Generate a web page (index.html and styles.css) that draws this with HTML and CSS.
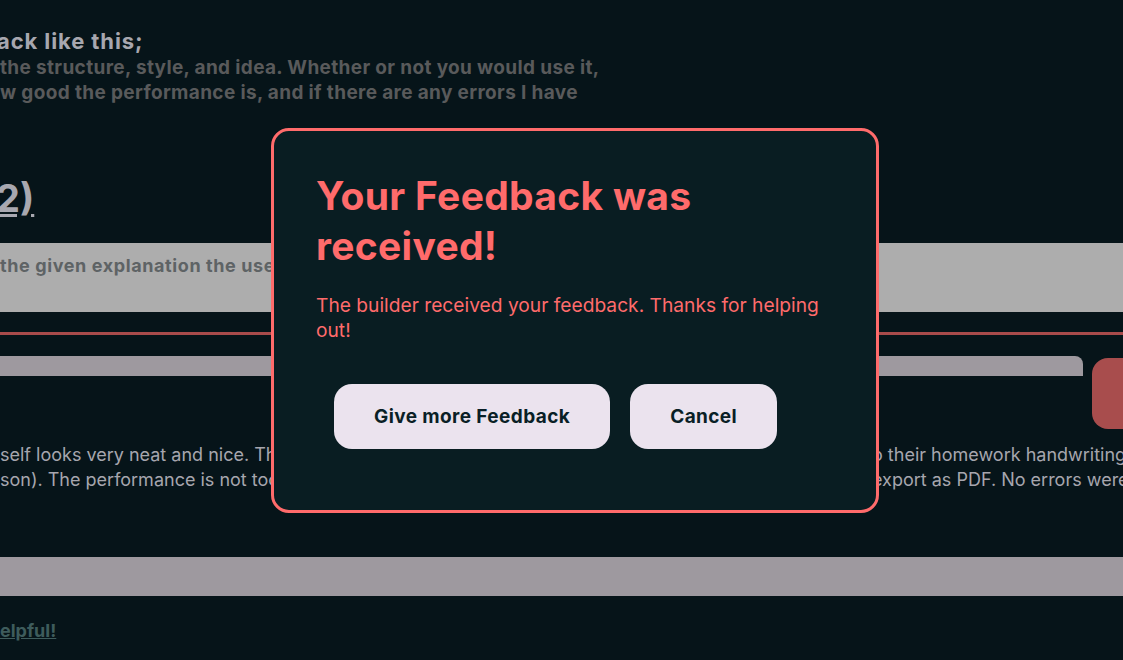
FILE: index.html
```html
<!DOCTYPE html>
<html>
<head>
    <title>Feedback received</title>
    <link rel="stylesheet" href="styles.css">
</head>
<body>
    <div class="page">
        <h3 class="intro-title">ack like this;</h3>
        <p class="intro-text">the structure, style, and idea. Whether or not you would use it,<br>w good the performance is, and if there are any errors I have</p>

        <h2 class="project-title"><a href="#">2)</a></h2>

        <div class="explain-box">the given explanation the user wrote about what the project is and how it works</div>

        <hr class="divider">

        <div class="input-row">
            <div class="input-bar"></div>
            <button class="send-btn"></button>
        </div>

        <div class="review-line">
            <span>self looks very neat and nice. The idea to let students upload</span>
            <span>o their homework handwriting</span>
        </div>
        <div class="review-line">
            <span>son). The performance is not too bad, only the</span>
            <span>export as PDF. No errors were found</span>
        </div>

        <div class="bottom-bar"></div>

        <a class="helpful" href="#">elpful!</a>
    </div>

    <div class="modal">
        <h1>Your Feedback was received!</h1>
        <p>The builder received your feedback. Thanks for helping out!</p>
        <div class="modal-actions">
            <button>Give more Feedback</button>
            <button>Cancel</button>
        </div>
    </div>
</body>
</html>
```

FILE: styles.css
```css
body {
    margin: 0;
    background: #061419;
    font-family: Inter, 'Noto Sans', sans-serif;
    overflow: hidden;
    height: 660px;
}
.page {
    width: 1123px;
}
.intro-title {
    margin: 0;
    padding-top: 27px;
    font-size: 22px;
    line-height: 28px;
    letter-spacing: 0.9px;
    color: #a7a7af;
    text-indent: -3px;
}
.intro-text {
    margin: 0;
    font-size: 19px;
    font-weight: 700;
    line-height: 25px;
    letter-spacing: 0.35px;
    color: #595a5b;
    white-space: nowrap;
}
.project-title {
    margin: 70px 0 0;
    font-size: 38px;
    line-height: 46px;
    text-indent: -4px;
}
.project-title a {
    color: #a8a8b0;
}
.explain-box {
    margin-top: 22px;
    height: 69px;
    padding-top: 12px;
    box-sizing: border-box;
    background: #adadad;
    color: #5e6365;
    font-size: 18px;
    font-weight: 700;
    letter-spacing: 0.6px;
    white-space: nowrap;
    overflow: hidden;
}
.divider {
    margin: 20px 0 0;
    border: none;
    height: 3px;
    background: #a84b4b;
}
.input-row {
    display: flex;
    gap: 9px;
    margin-top: 21px;
    height: 73px;
}
.input-bar {
    flex: 1;
    height: 20px;
    background: #9e999f;
    border-top-right-radius: 8px;
}
.send-btn {
    width: 31px;
    height: 71px;
    margin-top: 2px;
    border: none;
    border-radius: 16px 0 0 16px;
    background: #a84d4d;
}
.review-line {
    display: grid;
    grid-template-columns: 872px 1fr;
    font-size: 18px;
    line-height: 25px;
    color: #a6a6ae;
    white-space: nowrap;
    overflow: hidden;
}
.input-row + .review-line {
    margin-top: 13px;
}
.review-line span {
    overflow: hidden;
}
.bottom-bar {
    margin-top: 65px;
    height: 39px;
    background: #9e999f;
}
.helpful {
    display: inline-block;
    margin-top: 24px;
    font-size: 18px;
    font-weight: 700;
    color: #3e5c5c;
    text-decoration-color: #3e5c5c;
}

/* modal */
.modal {
    position: fixed;
    left: 271px;
    top: 128px;
    width: 608px;
    height: 385px;
    box-sizing: border-box;
    padding: 40px 42px 0;
    background: #091d22;
    border: 3px solid #ff6b6b;
    border-radius: 18px;
    color: #ff6b6b;
}
.modal h1 {
    margin: 0;
    font-size: 39px;
    line-height: 50px;
    letter-spacing: 0.3px;
    font-weight: 700;
    max-width: 420px;
}
.modal p {
    margin: 22px 0 0;
    font-size: 19.2px;
    line-height: 25px;
}
.modal-actions {
    display: flex;
    gap: 20px;
    margin: 41px 0 0 18px;
}
.modal-actions button {
    height: 65px;
    padding: 0 40px;
    border: none;
    border-radius: 18px;
    background: #ebe3ee;
    color: #0a1f26;
    font-family: Inter, 'Noto Sans', sans-serif;
    font-size: 19px;
    font-weight: 700;
    letter-spacing: 0.4px;
    cursor: pointer;
}
```
